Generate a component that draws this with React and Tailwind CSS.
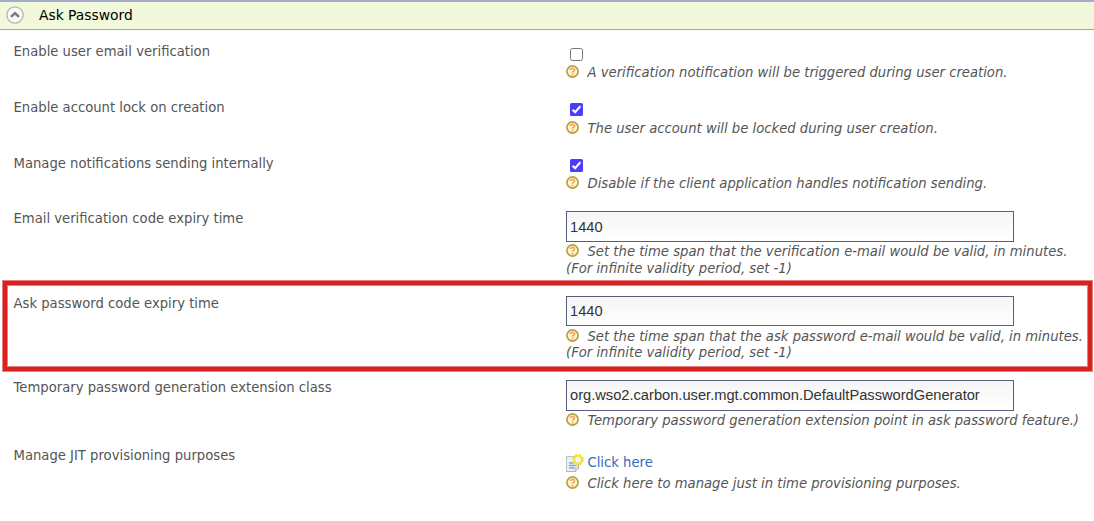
import React from "react";

function HelpIcon() {
  return (
    <svg className="mr-[8.5px] mt-[1px] inline-block h-[13px] w-[13px] shrink-0 align-top" viewBox="0 0 13 13">
      <circle cx="6.5" cy="6.5" r="5.6" fill="#fdf5d0" stroke="#b5a244" strokeWidth="1.7" />
      <path d="M4.5 5.1C4.5 2.7 8.6 2.8 8.5 5C8.4 6.3 6.6 6.2 6.6 7.8M6.6 8.8V10.4" fill="none" stroke="#f5a662" strokeWidth="1.7" />
    </svg>
  );
}

function CollapseIcon() {
  return (
    <svg className="mb-[2px] ml-[6px] h-[18px] w-[18px]" viewBox="0 0 18 18">
      <circle cx="9" cy="9" r="8.1" fill="#f8f8f8" stroke="#b8b8b8" strokeWidth="1.5" />
      <circle cx="9" cy="9" r="6.8" fill="none" stroke="#ffffff" strokeWidth="1" />
      <path d="M5 10.9L9 7.1L13 10.9" fill="none" stroke="#777777" strokeWidth="2.4" />
    </svg>
  );
}

function NoteIcon() {
  return (
    <svg className="mr-[3.5px] h-[18px] w-[18px]" viewBox="0 0 18 18">
      <path d="M0.5 2.5H12.5V14L9.5 17.5H0.5Z" fill="#eceff3" stroke="#c0c2c6" />
      <path d="M0.5 17.5H9.5L12.5 14V10" fill="none" stroke="#b0b2b6" />
      <path d="M9.3 17.3V14H12.5Z" fill="#ffffff" stroke="#b0b2b6" strokeWidth="0.8" />
      <path d="M3 9H8M3 11.5H10.5M3 14H8.5" stroke="#82a8d8" strokeWidth="1.4" />
      <circle cx="12" cy="5.7" r="5" fill="none" stroke="#f0e84a" strokeWidth="2" strokeDasharray="2.4 1.527" />
      <circle cx="12" cy="5.7" r="3.9" fill="#f4f4ee" stroke="#eee535" strokeWidth="2.1" />
    </svg>
  );
}

function Checkbox({ checked }) {
  return (
    <svg className="ml-[4px] block h-[13px] w-[13px]" viewBox="0 0 13 13" role="checkbox" aria-checked={checked}>
      {checked ? (
        <>
          <rect width="13" height="13" rx="1.6" fill="#4b3cff" />
          <path d="M2.6 6.7L5.1 9.2L10.4 3.2" fill="none" stroke="#ffffff" strokeWidth="2.1" />
        </>
      ) : (
        <rect x="0.5" y="0.5" width="12" height="12" rx="2" fill="#ffffff" stroke="#767676" />
      )}
    </svg>
  );
}

function Hint({ children, className = "" }) {
  return (
    <p className={`whitespace-nowrap italic leading-[17px] ${className}`}>
      <HelpIcon />
      {children}
    </p>
  );
}

function TextField({ value, className }) {
  return (
    <input
      type="text"
      readOnly
      value={value}
      className={`block w-[448px] border border-[#555f7d] bg-linear-to-b from-[#f5f5f5] to-white px-[3px] font-['Liberation_Sans',sans-serif] text-[14.67px] text-[#333] outline-none ${className}`}
    />
  );
}

function Row({ label, className, children }) {
  return (
    <div className={`grid grid-cols-[552.5px_1fr] ${className}`}>
      <div className="pt-px leading-4">{label}</div>
      <div className="min-w-0">{children}</div>
    </div>
  );
}

export default function App() {
  return (
    <main className="relative h-[521px] w-[1094px] overflow-hidden bg-white font-['DejaVu_Sans',sans-serif] text-[13.2px] text-[#555]">
      <h2 className="flex h-[30px] items-center border-b border-t-2 border-b-[#a2a2be] border-t-[#a6adca] bg-[#f2f8da] text-[13.85px] text-black">
        <CollapseIcon />
        <span className="ml-[15px]">Ask Password</span>
      </h2>
      <div className="pl-[13.5px] pt-[13px]">
        <Row label="Enable user email verification" className="h-[56px]">
          <div className="pt-[5px]"><Checkbox checked={false} /></div>
          <Hint className="pt-[3px]">A verification notification will be triggered during user creation.</Hint>
        </Row>
        <Row label="Enable account lock on creation" className="h-[56px]">
          <div className="pt-[4px]"><Checkbox checked /></div>
          <Hint className="pt-[4px]">The user account will be locked during user creation.</Hint>
        </Row>
        <Row label="Manage notifications sending internally" className="h-[55px]">
          <div className="pt-[4px]"><Checkbox checked /></div>
          <Hint className="pt-[3px]">Disable if the client application handles notification sending.</Hint>
        </Row>
        <Row label="Email verification code expiry time" className="h-[85px]">
          <TextField value="1440" className="mt-[1px] h-[31px]" />
          <Hint className="pt-[1px]">Set the time span that the verification e-mail would be valid, in minutes.</Hint>
          <p className="italic leading-[17px]">(For infinite validity period, set -1)</p>
        </Row>
        <Row label="Ask password code expiry time" className="h-[84px]">
          <TextField value="1440" className="mt-[1px] h-[30px]" />
          <Hint className="pt-[2px]">Set the time span that the ask password e-mail would be valid, in minutes.</Hint>
          <p className="italic leading-[16px]">(For infinite validity period, set -1)</p>
        </Row>
        <Row label="Temporary password generation extension class" className="h-[68px]">
          <TextField value="org.wso2.carbon.user.mgt.common.DefaultPasswordGenerator" className="mt-[1px] h-[31px] pb-[2px]" />
          <Hint className="pt-[1px]">Temporary password generation extension point in ask password feature.)</Hint>
        </Row>
        <Row label="Manage JIT provisioning purposes" className="h-[56px]">
          <a className="flex pt-[7px] leading-[18px] text-[#386abb]">
            <NoteIcon />
            Click here
          </a>
          <Hint className="pt-[3px]">Click here to manage just in time provisioning purposes.</Hint>
        </Row>
      </div>
      <div className="pointer-events-none absolute left-[2px] top-[280px] h-[92px] w-[1091px] border border-[#e88080]">
        <div className="h-full w-full border-4 border-[#d82222]">
          <div className="h-full w-full border border-[#e88080]" />
        </div>
      </div>
    </main>
  );
}
